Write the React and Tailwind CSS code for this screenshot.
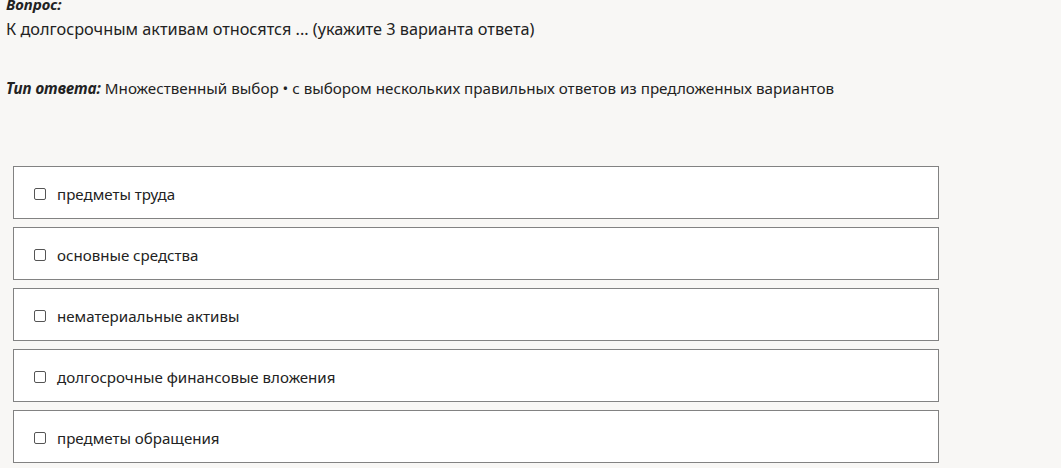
export default function App() {
  const options = [
    "предметы труда",
    "основные средства",
    "нематериальные активы",
    "долгосрочные финансовые вложения",
    "предметы обращения",
  ];
  return (
    <div
      className="w-[1061px] h-[468px] overflow-hidden bg-[#f8f7f5] text-[#222]"
      style={{ fontFamily: '"Noto Sans", "Open Sans", sans-serif' }}
    >
      <div className="px-[6px] -mt-[6px]">
        <p className="text-[15px] leading-[20px] font-bold italic">Вопрос:</p>
        <p className="text-[16.3px] leading-[24px] mt-[3px]">
          К долгосрочным активам относятся ... (укажите 3 варианта ответа)
        </p>
        <p className="text-[15.2px] leading-[24px] mt-[35px]">
          <span className="font-bold italic">Тип ответа:</span> Множественный выбор • с выбором нескольких правильных ответов из предложенных вариантов
        </p>
      </div>
      <div className="mt-[66px] ml-[13px] w-[926px] flex flex-col gap-[8px]">
        {options.map((o) => (
          <label
            key={o}
            className="h-[53px] border border-[#828282] bg-white flex items-center pl-[20px] pt-[3px] gap-[11px] text-[15.1px]"
          >
            <span className="w-[12px] h-[12px] border border-[#555] rounded-[2px] bg-white" />
            <span className="pt-[1px]">{o}</span>
          </label>
        ))}
      </div>
    </div>
  );
}
